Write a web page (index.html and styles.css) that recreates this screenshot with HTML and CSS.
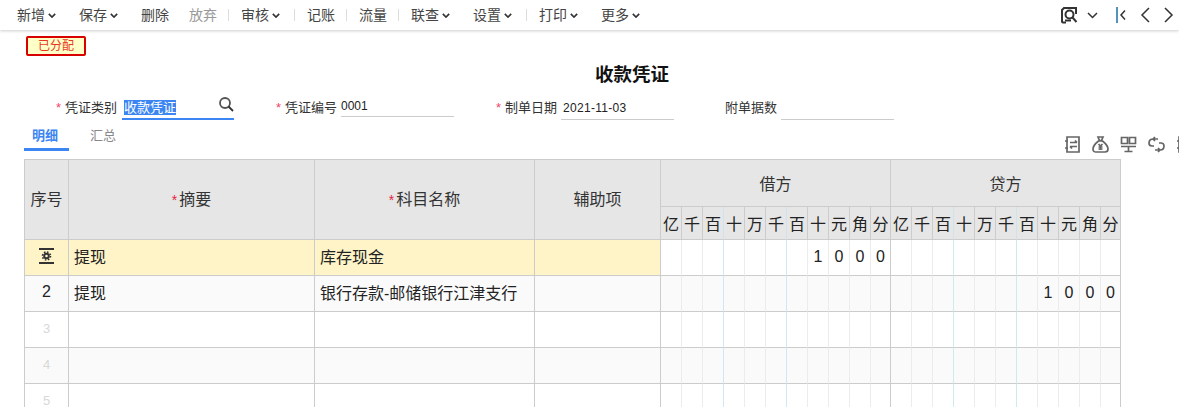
FILE: index.html
```html
<!DOCTYPE html>
<html lang="zh">
<head>
<meta charset="utf-8">
<title>收款凭证</title>
<link rel="stylesheet" href="styles.css">
</head>
<body>
<header class="toolbar">
  <nav class="actions">
    <span class="act">新增<svg class="chev" viewBox="0 0 10 6"><path d="M1 1l4 4 4-4"/></svg></span>
    <span class="act">保存<svg class="chev" viewBox="0 0 10 6"><path d="M1 1l4 4 4-4"/></svg></span>
    <span class="act">删除</span>
    <span class="act off">放弃</span>
    <i class="sep"></i>
    <span class="act">审核<svg class="chev" viewBox="0 0 10 6"><path d="M1 1l4 4 4-4"/></svg></span>
    <i class="sep"></i>
    <span class="act">记账</span>
    <i class="sep"></i>
    <span class="act">流量</span>
    <i class="sep"></i>
    <span class="act">联查<svg class="chev" viewBox="0 0 10 6"><path d="M1 1l4 4 4-4"/></svg></span>
    <span class="act">设置<svg class="chev" viewBox="0 0 10 6"><path d="M1 1l4 4 4-4"/></svg></span>
    <i class="sep"></i>
    <span class="act">打印<svg class="chev" viewBox="0 0 10 6"><path d="M1 1l4 4 4-4"/></svg></span>
    <span class="act">更多<svg class="chev" viewBox="0 0 10 6"><path d="M1 1l4 4 4-4"/></svg></span>
  </nav>
  <div class="nav-icons">
    <svg class="ic-find" viewBox="0 0 17 17"><path d="M5 15.500H2a1 1 0 0 1-1-1V3l2-2h12v6"/><path d="M4 13.500h6"/><circle cx="8.500" cy="7.500" r="4"/><path d="M11.500 10.500l4 4.500"/></svg>
    <svg class="ic-down" viewBox="0 0 11 7"><path d="M1 1l4.500 4.500L10 1"/></svg>
    <svg class="ic-first" viewBox="0 0 10 16"><path class="bar" d="M1 0v16"/><path d="M9 3.500L5 8l4 4.500"/></svg>
    <svg class="ic-step" viewBox="0 0 10 16"><path d="M9 1L2 8l7 7"/></svg>
    <svg class="ic-step" viewBox="0 0 10 16"><path d="M1 1l7 7-7 7"/></svg>
  </div>
</header>

<div class="status"><span class="tag">已分配</span></div>
<h1 class="title">收款凭证</h1>

<form class="fields">
  <div class="field">
    <label class="lbl"><b>*</b>凭证类别</label>
    <div class="val active"><span class="sel">收款凭证</span>
      <svg class="ic-search" viewBox="0 0 16 16"><circle cx="7" cy="7" r="5"/><path class="tip" d="M10.500 10.500L15 15"/></svg>
    </div>
  </div>
  <div class="field">
    <label class="lbl"><b>*</b>凭证编号</label>
    <div class="val num up">0001</div>
  </div>
  <div class="field">
    <label class="lbl"><b>*</b>制单日期</label>
    <div class="val num">2021-11-03</div>
  </div>
  <div class="field">
    <label class="lbl">附单据数</label>
    <div class="val"></div>
  </div>
</form>

<div class="tabbar">
  <div class="tabs">
    <span class="tab on">明细</span>
    <span class="tab">汇总</span>
  </div>
  <div class="tools">
    <svg viewBox="0 0 17 17"><path d="M3 1h12v15H3z"/><path d="M1 5h3M1 12h3M6 6.500h7M11 4.500l2 2M13 10.500H6M8 12.500l-2-2"/></svg>
    <svg viewBox="0 0 17 17"><path d="M6 1h5l-1.500 3.500h-2zM6.500 5h4C13 7 16 10 16 13c0 2-1 3-3 3H4c-2 0-3-1-3-3 0-3 3-6 5.500-8z"/><path d="M6.500 8l2 2 2-2M8.500 10v4M6.500 11h4M6.500 13h4"/></svg>
    <svg viewBox="0 0 17 17"><path d="M1.500 1.500h6v6h-6zM9.500 1.500h6v6h-6zM1 10.500h15M8.500 10.500v5M4.500 15.500h8"/></svg>
    <svg viewBox="0 0 17 17"><path d="M10 3H5C2.500 3 1 4.500 1 7s1.500 3 3 3h2M7 1L5 3l2 2M7 14h5c2.500 0 4-1.500 4-4s-1.500-3-3-3h-2M10 16l2-2-2-2"/></svg>
    <svg viewBox="0 0 17 17"><path d="M3 1h12v15H3z"/><path d="M1 5h3M1 12h3M6 6.500h7M13 10.500H6"/></svg>
  </div>
</div>

<table class="grid">
  <colgroup>
    <col class="c-no"><col class="c-sum"><col class="c-acc"><col class="c-aux">
    <col class="c-d" span="10"><col class="c-l"><col class="c-d" span="10"><col class="c-l">
  </colgroup>
  <thead>
    <tr class="h1">
      <th rowspan="2" class="lift">序号</th>
      <th rowspan="2" class="lift"><b>*</b>摘要</th>
      <th rowspan="2" class="lift"><b>*</b>科目名称</th>
      <th rowspan="2" class="lift">辅助项</th>
      <th colspan="11">借方</th>
      <th colspan="11">贷方</th>
    </tr>
    <tr class="h2">
      <th>亿</th><th>千</th><th>百</th><th>十</th><th>万</th><th>千</th><th>百</th><th>十</th><th>元</th><th>角</th><th>分</th>
      <th>亿</th><th>千</th><th>百</th><th>十</th><th>万</th><th>千</th><th>百</th><th>十</th><th>元</th><th>角</th><th>分</th>
    </tr>
  </thead>
  <tbody>
    <tr class="cur">
      <td class="no"><svg class="ic-row" viewBox="0 0 15 16"><path class="rule" d="M0 1h15M0 15h15"/><circle class="teeth" cx="7.500" cy="8" r="4"/><circle class="hub" cx="7.500" cy="8" r="2.300"/></svg></td>
      <td>提现</td><td>库存现金</td><td></td>
      <td></td><td></td><td></td><td></td><td></td><td></td><td></td><td>1</td><td>0</td><td>0</td><td>0</td>
      <td></td><td></td><td></td><td></td><td></td><td></td><td></td><td></td><td></td><td></td><td></td>
    </tr>
    <tr>
      <td class="no">2</td>
      <td>提现</td><td>银行存款-邮储银行江津支行</td><td></td>
      <td></td><td></td><td></td><td></td><td></td><td></td><td></td><td></td><td></td><td></td><td></td>
      <td></td><td></td><td></td><td></td><td></td><td></td><td></td><td>1</td><td>0</td><td>0</td><td>0</td>
    </tr>
    <tr>
      <td class="no dim">3</td>
      <td></td><td></td><td></td>
      <td></td><td></td><td></td><td></td><td></td><td></td><td></td><td></td><td></td><td></td><td></td>
      <td></td><td></td><td></td><td></td><td></td><td></td><td></td><td></td><td></td><td></td><td></td>
    </tr>
    <tr>
      <td class="no dim">4</td>
      <td></td><td></td><td></td>
      <td></td><td></td><td></td><td></td><td></td><td></td><td></td><td></td><td></td><td></td><td></td>
      <td></td><td></td><td></td><td></td><td></td><td></td><td></td><td></td><td></td><td></td><td></td>
    </tr>
    <tr>
      <td class="no dim">5</td>
      <td></td><td></td><td></td>
      <td></td><td></td><td></td><td></td><td></td><td></td><td></td><td></td><td></td><td></td><td></td>
      <td></td><td></td><td></td><td></td><td></td><td></td><td></td><td></td><td></td><td></td><td></td>
    </tr>
  </tbody>
</table>
</body>
</html>
```

FILE: styles.css
```css
* { box-sizing: border-box; }
html, body { margin: 0; height: 407px; overflow: hidden; background: #fff; }
body {
  font-family: "Liberation Sans", "Noto Sans CJK SC", sans-serif;
  color: #333;
  font-size: 14px;
}
svg { fill: none; display: block; }

.toolbar {
  height: 30px;
  display: flex;
  align-items: center;
  justify-content: space-between;
  padding: 0 5px 0 17px;
  background: #fff;
  box-shadow: 0 1px 3px rgba(0, 0, 0, .2);
}
.actions { display: flex; align-items: center; }
.act {
  display: flex;
  align-items: center;
  gap: 3px;
  margin-right: 20px;
  font-size: 14px;
  line-height: 20px;
  color: #444;
}
.act.off { color: #999; }
.act + .sep { margin-left: -9px; }
.sep { width: 1px; height: 12px; background: #ddd; margin: 0 12px 0 0; }
.chev { width: 8px; height: 5px; margin-right: 3px; stroke: #333; stroke-width: 2; }

.nav-icons { display: flex; align-items: center; }
.ic-find { width: 17px; height: 17px; stroke: #333; stroke-width: 2; margin-right: 9px; }
.ic-down { width: 11px; height: 7px; stroke: #333; stroke-width: 1.5; margin-right: 18px; }
.ic-first { width: 10px; height: 16px; stroke: #333; stroke-width: 1.5; margin-right: 14px; }
.ic-first .bar { stroke: #1d6fa5; }
.ic-step { width: 10px; height: 16px; stroke: #333; stroke-width: 1.5; margin-right: 14px; }
.ic-step:last-child { margin-right: 0; }

.status { padding: 6px 0 0 26px; height: 26px; display: flex; }
.tag {
  width: 60px;
  height: 20px;
  border: 2px solid #d90000;
  border-radius: 2px;
  background: #ffffc8;
  color: #e8371e;
  font-size: 12px;
  line-height: 16px;
  text-align: center;
}
.title {
  margin: 6px 0 0;
  height: 28px;
  font-size: 18.5px;
  line-height: 26px;
  font-weight: 700;
  color: #111;
  text-align: center;
  padding-left: 85px;
}

.fields { display: flex; margin: 4px 0 0 14px; height: 28px; }
.field { width: 220px; display: flex; align-items: flex-start; }
.lbl {
  width: 103px;
  flex: none;
  font-size: 13px;
  line-height: 28px;
  text-align: right;
  color: #333;
}
.lbl b { color: #f0436a; font-weight: 400; margin-right: 4px; }
.val {
  flex: 1;
  margin-left: 4px;
  height: 26px;
  border-bottom: 1px solid #ccc;
  font-size: 12px;
  line-height: 28px;
  color: #222;
  display: flex;
  align-items: center;
}
.val.num { padding-left: 2px; font-size: 12px; letter-spacing: .3px; padding-top: 2px; }
.val.up { height: 23px; padding: 2px 0 0; line-height: 20px; align-items: flex-start; letter-spacing: 0; }
.val.active {
  margin-left: 5px;
  border-bottom: 2px solid #3b86f2;
  justify-content: space-between;
  padding: 2px 0 0 2px;
}
.sel { background: #3b86f2; color: #fff; font-size: 13px; line-height: 15px; }
.ic-search { width: 16px; height: 16px; stroke: #555; stroke-width: 1.8; position: relative; top: -3px; }
.ic-search .tip { stroke: #333; }

.tabbar { display: flex; justify-content: space-between; height: 35px; padding-left: 24px; margin-top: 2px; }
.tabs { display: flex; }
.tab { width: 45px; height: 27px; padding: 2px 0 0 8px; font-size: 13px; line-height: 20px; color: #888; margin-right: 13px; }
.tab.on { color: #3b86f2; font-weight: 700; border-bottom: 3px solid #3b86f2; }
.tools { display: flex; gap: 11px; width: 115px; padding-top: 12px; overflow: hidden; flex: none; }
.tools svg { width: 17px; height: 17px; flex: none; stroke: #666; stroke-width: 1.7; }

.grid {
  margin-left: 24px;
  width: 1097px;
  table-layout: fixed;
  border-collapse: separate;
  border-spacing: 0;
  border-top: 1px solid #ccc;
  border-left: 1px solid #ccc;
  font-size: 16px;
  color: #222;
}
.c-no { width: 44px; }
.c-sum { width: 246px; }
.c-acc { width: 220px; }
.c-aux { width: 126px; }
.c-d { width: 21px; }
.c-l { width: 20px; }

th, td { padding: 0; border-right: 1px solid #ccc; border-bottom: 1px solid #ccc; }
th { background: #e6e6e6; font-weight: 400; color: #333; text-align: center; }
th b { color: #e8213f; font-weight: 400; font-size: 14px; margin-right: 2px; }
th.lift { padding-bottom: 4px; }
.h1 { height: 47px; }
.h2 { height: 33px; }
.h2 th { font-size: 16px; color: #222; }
.h2 th:nth-child(3), .h2 th:nth-child(6), .h2 th:nth-child(14), .h2 th:nth-child(17) { border-right-color: #cfe3ee; }

tbody tr { height: 36px; }
tbody tr:nth-child(even) td { background: #fafafa; }
tbody td { padding: 0 0 4px 5px; white-space: nowrap; overflow: hidden; }
tbody td:nth-child(n+5) { padding: 0 0 2px; text-align: center; border-right-color: #ececec; }
tbody td:nth-child(15), tbody td:nth-child(26) { border-right-color: #ccc; }
tbody td:nth-child(7), tbody td:nth-child(10), tbody td:nth-child(18), tbody td:nth-child(21) { border-right-color: #cfe8f5; }
tbody td.no { padding: 0 0 3px; text-align: center; }
tbody td.dim { font-size: 13px; color: #d8d8d8; }
tbody tr.cur td:nth-child(-n+4) { background: #fff4c8; }
.ic-row { width: 15px; height: 16px; margin: 0 auto; }
.ic-row .rule { stroke: #333; stroke-width: 2; }
.ic-row .teeth { stroke: #333; stroke-width: 1.6; stroke-dasharray: 1.600 1.540; }
.ic-row .hub { fill: #fff4c8; stroke: #333; stroke-width: 2; }
```
